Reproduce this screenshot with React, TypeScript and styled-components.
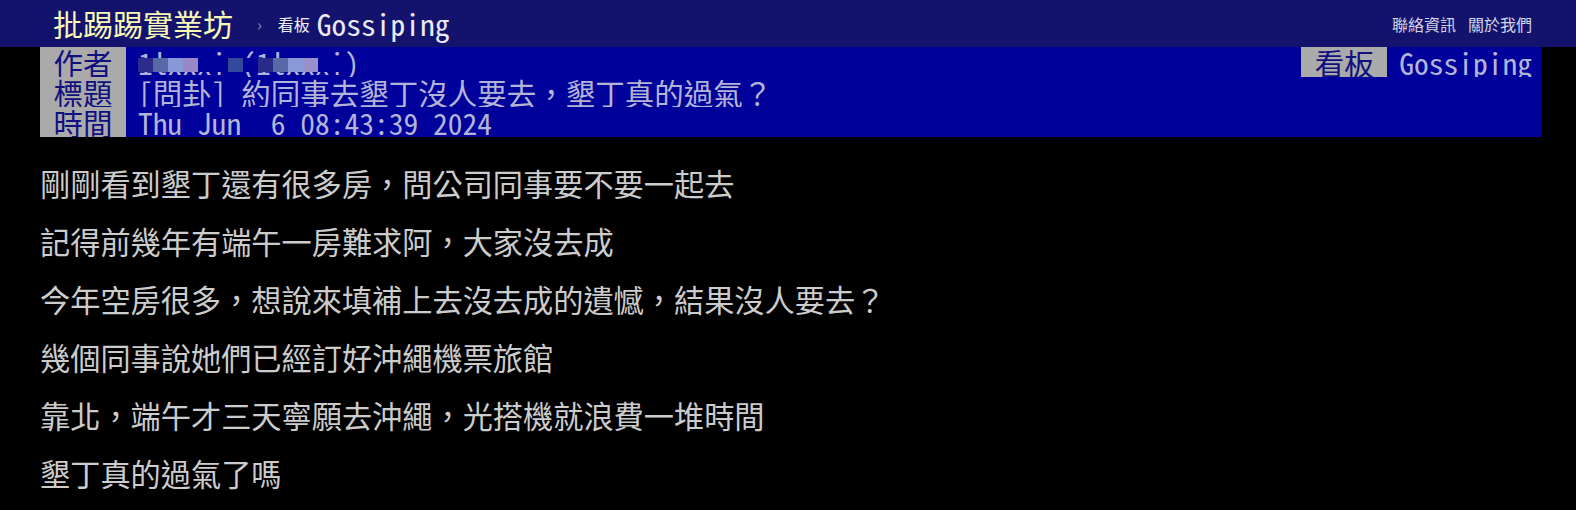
import React from "react";
import styled, { createGlobalStyle } from "styled-components";

const MONO = `"Noto Sans Mono CJK TC", "Noto Sans CJK TC", "Liberation Mono", monospace`;

const GlobalStyle = createGlobalStyle`
    html, body {
        margin: 0;
        padding: 0;
        background: #000;
    }
    body {
        font-family: ${MONO};
        font-weight: 300;
        color: #c8c8c8;
    }
`

const TopBar = styled.div`
    display: flex;
    align-items: center;
    justify-content: space-between;
    height: 47px;
    background: #13136e;
    padding: 0 44px 0 53px;
    box-sizing: border-box;
`
const BarLeft = styled.div`
    display: flex;
    align-items: center;
    white-space: nowrap;
`
const Brand = styled.span`
    color: #fafab4;
    font-size: 30px;
    font-weight: 400;
    line-height: 47px;
`
const Sep = styled.span`
    color: #8c8cb4;
    font-size: 16px;
    margin: 0 16px 0 24px;
`
const BoardLabel = styled.span`
    color: #f0f0f0;
    font-size: 16px;
    margin-right: 7px;
`
const BoardName = styled.span`
    color: #eaeaf2;
    font-size: 29.5px;
    line-height: 47px;
`
const Links = styled.div`
    display: flex;
    gap: 12px;
    font-size: 16px;
    color: #d4d4e4;
`

const Main = styled.div`
    padding: 0 34px 0 40px;
`
const Meta = styled.div`
    background: #00009a;
    font-size: 29.5px;
`
const MetaLine = styled.div`
    display: flex;
    height: 30px;
    line-height: 30px;
    white-space: pre;
    overflow: hidden;
`
const Tag = styled.span`
    flex: none;
    width: 86px;
    text-align: center;
    background: #aaaaaa;
    color: #101080;
`
const Value = styled.span<{ grow?: boolean }>`
    position: relative;
    padding: 0 10px 0 12px;
    color: #b4b4d8;
    flex: ${p => (p.grow ? 1 : "none")};
`
const Mosaic = styled.span`
    position: absolute;
    left: 12px;
    top: 11px;
    height: 14px;
    width: 210px;
    background: #00009a;
    display: flex;
`
const Block = styled.span<{ c: string; w?: number }>`
    width: ${p => p.w ?? 15}px;
    height: 100%;
    background: ${p => p.c};
`

const Body = styled.div`
    padding-top: 17px;
`
const Line = styled.div`
    height: 58px;
    line-height: 58px;
    font-size: 30.2px;
    color: #cccccc;
    white-space: nowrap;
`

const lines = [
    "剛剛看到墾丁還有很多房，問公司同事要不要一起去",
    "記得前幾年有端午一房難求阿，大家沒去成",
    "今年空房很多，想說來填補上去沒去成的遺憾，結果沒人要去？",
    "幾個同事說她們已經訂好沖繩機票旅館",
    "靠北，端午才三天寧願去沖繩，光搭機就浪費一堆時間",
    "墾丁真的過氣了嗎",
]

const mosaic: [string, number?][] = [
    ["transparent", 0],
    ["#2c2c8c"], ["#5868a8"], ["#8898d8"], ["#9888c8"],
    ["transparent", 30],
    ["#34489c"],
    ["transparent", 15],
    ["#2a2a88"], ["#5868a8"], ["#8a9ad8"], ["#9890c8"],
]

export default function App() {
    return (
        <>
            <GlobalStyle />
            <TopBar>
                <BarLeft>
                    <Brand>批踢踢實業坊</Brand>
                    <Sep>›</Sep>
                    <BoardLabel>看板</BoardLabel>
                    <BoardName>Gossiping</BoardName>
                </BarLeft>
                <Links>
                    <span>聯絡資訊</span>
                    <span>關於我們</span>
                </Links>
            </TopBar>
            <Main>
                <Meta>
                    <MetaLine>
                        <Tag>作者</Tag>
                        <Value grow>
                            1lxxxi (1lxxxi)
                            <Mosaic>
                                {mosaic.map(([c, w], i) => (
                                    <Block key={i} c={c} w={w} />
                                ))}
                            </Mosaic>
                        </Value>
                        <Tag>看板</Tag>
                        <Value>Gossiping</Value>
                    </MetaLine>
                    <MetaLine>
                        <Tag>標題</Tag>
                        <Value grow>[問卦] 約同事去墾丁沒人要去，墾丁真的過氣？</Value>
                    </MetaLine>
                    <MetaLine>
                        <Tag>時間</Tag>
                        <Value grow>Thu Jun  6 08:43:39 2024</Value>
                    </MetaLine>
                </Meta>
                <Body>
                    {lines.map((t, i) => (
                        <Line key={i}>{t}</Line>
                    ))}
                </Body>
            </Main>
        </>
    )
}
